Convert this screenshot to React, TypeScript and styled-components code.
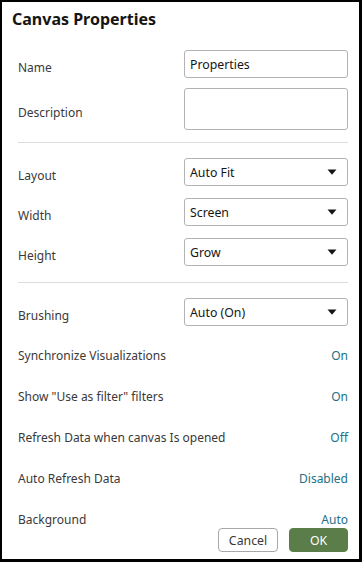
import styled, { createGlobalStyle } from "styled-components";

const GlobalStyle = createGlobalStyle`
  html, body {
    margin: 0;
    padding: 0;
    background: #ffffff;
  }
  * { box-sizing: border-box; }
`;

type SelectProps = { value: string };
type LinkRowProps = { label: string; value: string; last?: boolean };

const selectRows = [
  { label: "Layout", value: "Auto Fit" },
  { label: "Width", value: "Screen" },
  { label: "Height", value: "Grow" },
];

const linkRows = [
  { label: "Synchronize Visualizations", value: "On" },
  { label: 'Show "Use as filter" filters', value: "On" },
  { label: "Refresh Data when canvas Is opened", value: "Off" },
  { label: "Auto Refresh Data", value: "Disabled" },
];

function Select({ value }: SelectProps) {
  return (
    <SelectBox>
      <span>{value}</span>
      <Caret viewBox="0 0 10 6">
        <path d="M0.5 0.5 L9.5 0.5 L5 5.8 Z" fill="#161513" />
      </Caret>
    </SelectBox>
  );
}

function LinkRow({ label, value, last }: LinkRowProps) {
  return (
    <TextRow $last={last}>
      <Label $flush>{label}</Label>
      <LinkValue>{value}</LinkValue>
    </TextRow>
  );
}

export default function App() {
  return (
    <>
      <GlobalStyle />
      <Dialog>
        <Title>Canvas Properties</Title>
        <Body>
          <Section $gap={10}>
            <FieldRow>
              <Label>Name</Label>
              <Input>Properties</Input>
            </FieldRow>
            <FieldRow>
              <Label>Description</Label>
              <TextArea />
            </FieldRow>
          </Section>
          <Divider $top={12} />
          <Section $gap={12}>
            {selectRows.map((r) => (
              <FieldRow key={r.label}>
                <Label>{r.label}</Label>
                <Select value={r.value} />
              </FieldRow>
            ))}
          </Section>
          <Divider $top={16} />
          <Section $gap={0}>
            <FieldRow>
              <Label>Brushing</Label>
              <Select value="Auto (On)" />
            </FieldRow>
            <LinkList>
              {linkRows.map((r) => (
                <LinkRow key={r.label} label={r.label} value={r.value} />
              ))}
              <LinkRow label="Background" value="Auto" last />
            </LinkList>
          </Section>
        </Body>
        <Footer>
          <Button>Cancel</Button>
          <Button $primary>OK</Button>
        </Footer>
      </Dialog>
    </>
  );
}

const Dialog = styled.div`
  width: 362px;
  height: 562px;
  border: 2px solid #000;
  border-right-width: 3px;
  border-bottom-width: 3px;
  background: #fff;
  display: flex;
  flex-direction: column;
  font-family: "Noto Sans", "Open Sans", sans-serif;
  color: #3a3938;
  overflow: hidden;
`;

const Title = styled.h1`
  margin: 0;
  padding: 6px 0 0 10px;
  font-size: 16px;
  font-weight: 700;
  line-height: 22px;
  color: #161513;
`;

const Body = styled.div`
  flex: 1;
  min-height: 0;
  display: flex;
  flex-direction: column;
  padding: 20px 11px 0 16px;
`;

const Section = styled.div<{ $gap: number }>`
  display: flex;
  flex-direction: column;
  gap: ${(p) => p.$gap}px;
`;

const FieldRow = styled.div`
  display: grid;
  grid-template-columns: 1fr 164px;
  align-items: center;
`;

const Label = styled.div<{ $flush?: boolean }>`
  font-size: 12px;
  line-height: 18px;
  padding-top: ${(p) => (p.$flush ? "0" : "7px")};
  color: #3a3938;
  white-space: nowrap;
`;

const Input = styled.div`
  height: 28px;
  border: 1px solid #b3b3b3;
  border-radius: 3px;
  padding: 0 5px;
  display: flex;
  align-items: center;
  font-size: 12.3px;
  color: #161513;
`;

const TextArea = styled.div`
  height: 42px;
  border: 1px solid #b3b3b3;
  border-radius: 3px;
`;

const SelectBox = styled(Input)`
  justify-content: space-between;
  padding-right: 10px;
`;

const Caret = styled.svg`
  width: 10px;
  height: 6px;
`;

const Divider = styled.hr<{ $top: number }>`
  margin: ${(p) => p.$top}px 0 15px;
  border: 0;
  border-top: 1px solid #dcdcdc;
`;

const LinkList = styled.div`
  display: flex;
  flex-direction: column;
  margin-top: 9px;
`;

const TextRow = styled.div<{ $last?: boolean }>`
  height: ${(p) => (p.$last ? "30px" : "41px")};
  display: flex;
  align-items: ${(p) => (p.$last ? "flex-end" : "center")};
  justify-content: space-between;
`;

const LinkValue = styled.div`
  font-size: 12px;
  line-height: 18px;
  color: #227085;
`;

const Footer = styled.div`
  display: flex;
  justify-content: flex-end;
  gap: 11px;
  padding: 0 11px 7px 0;
`;

const Button = styled.button<{ $primary?: boolean }>`
  height: 24px;
  width: ${(p) => (p.$primary ? "59px" : "60px")};
  border-radius: 4px;
  border: 1px solid ${(p) => (p.$primary ? "#5a7d4a" : "#a8a8a8")};
  background: ${(p) => (p.$primary ? "#5a7d4a" : "#fff")};
  color: ${(p) => (p.$primary ? "#fff" : "#3a3938")};
  font-family: inherit;
  font-size: 12.3px;
  padding: 0;
  cursor: pointer;
`;
